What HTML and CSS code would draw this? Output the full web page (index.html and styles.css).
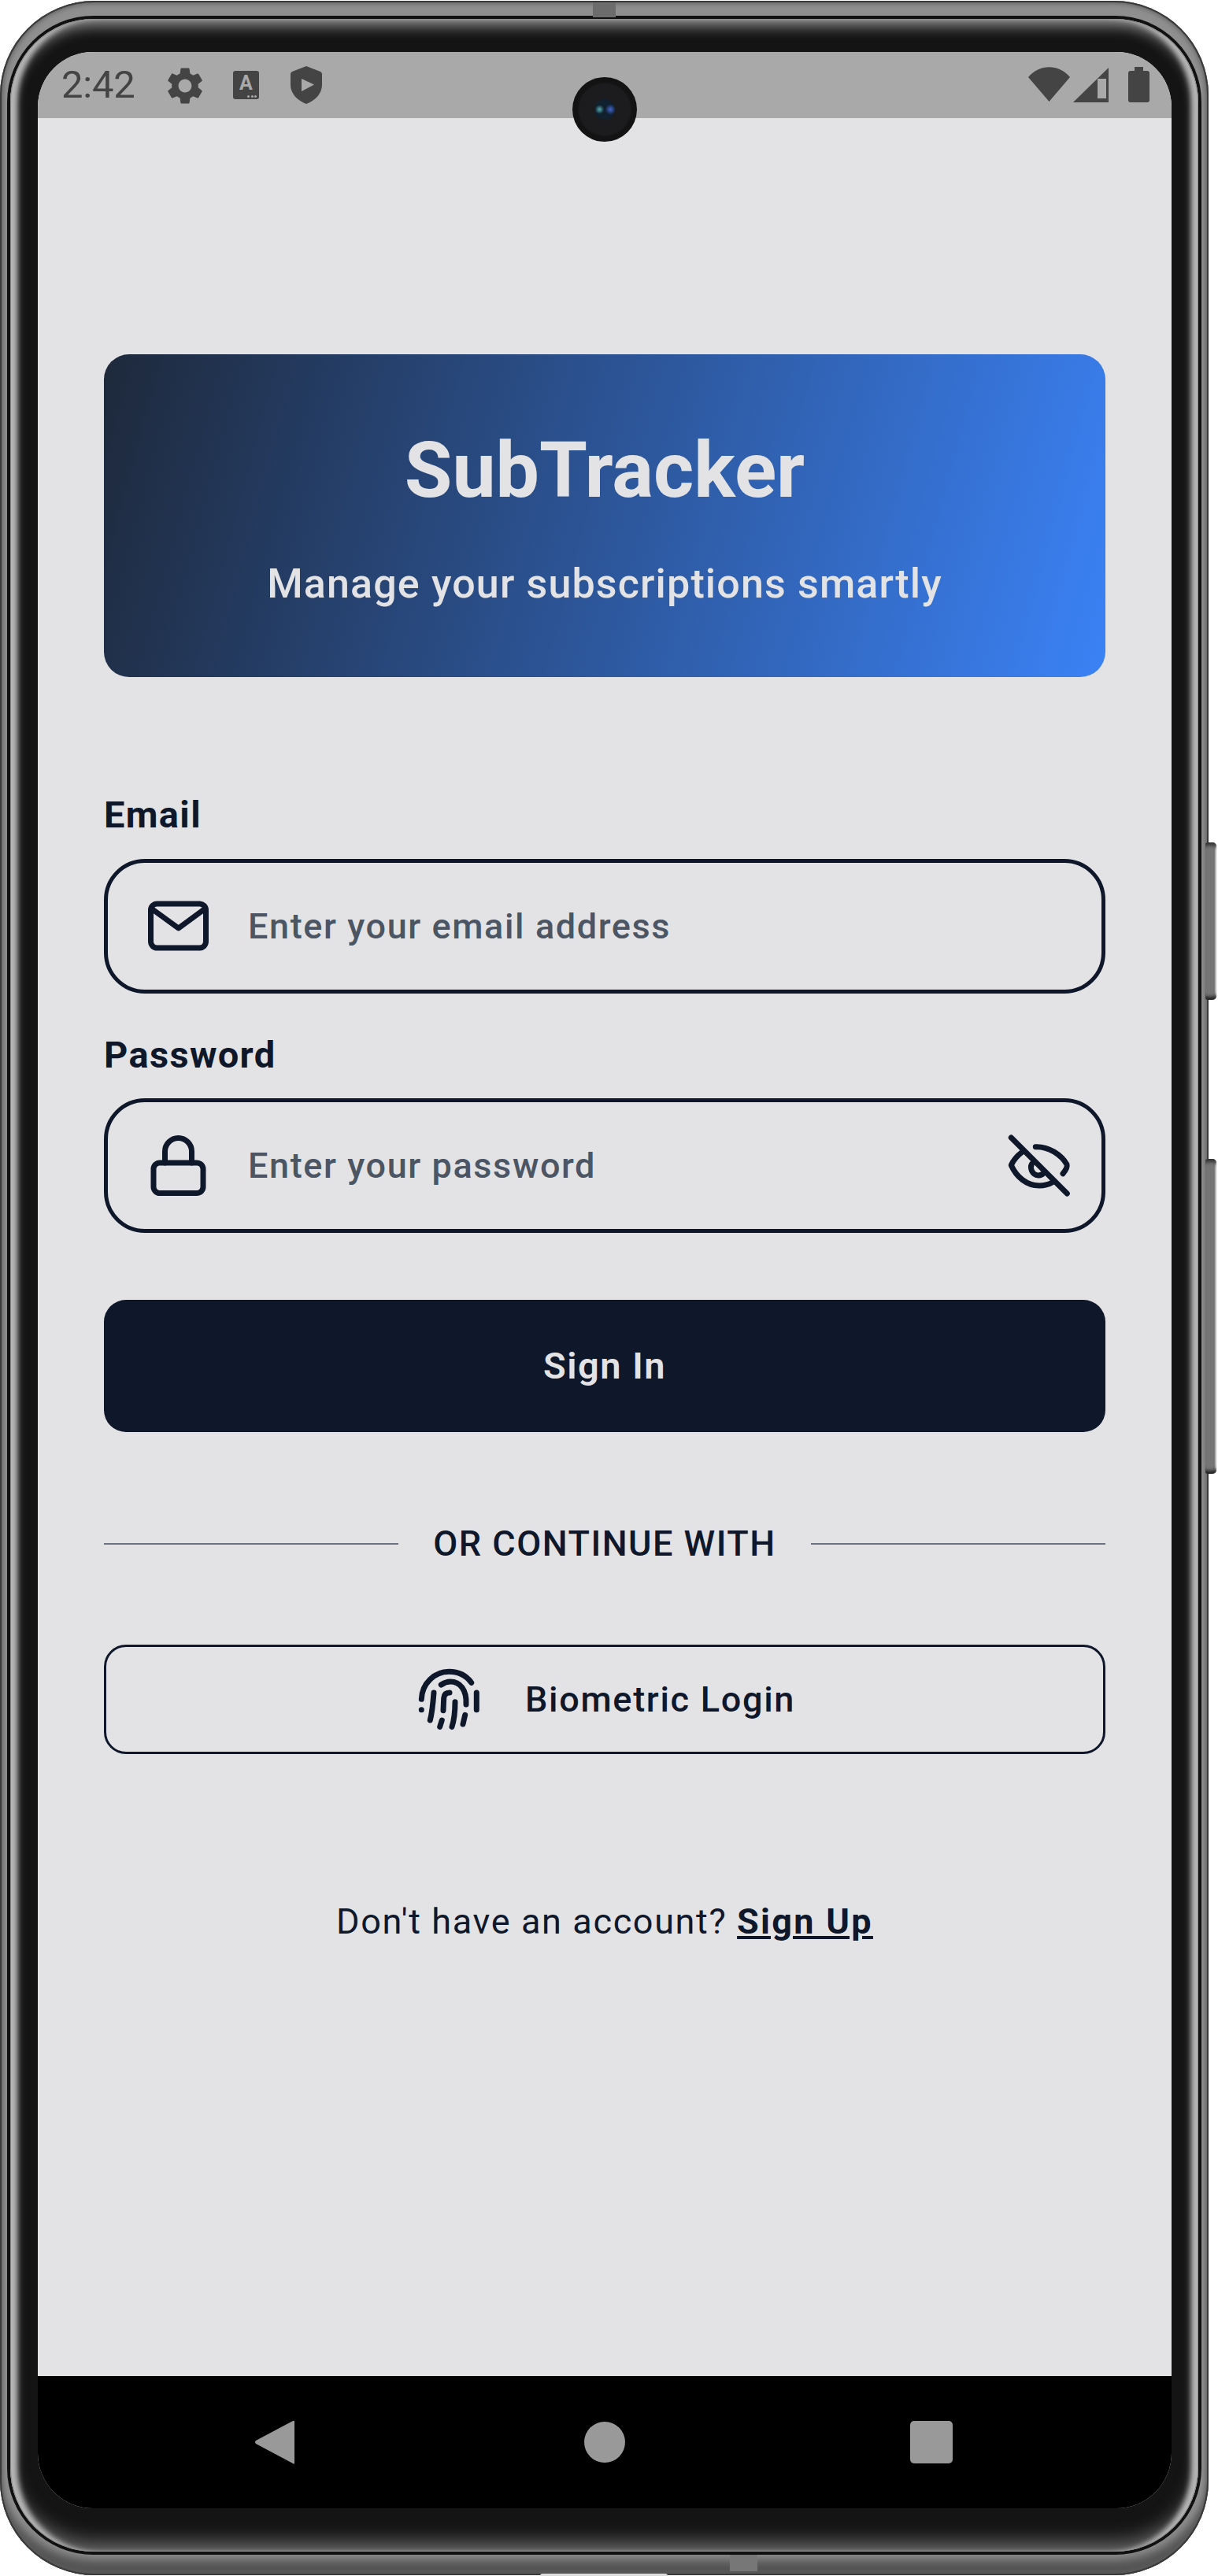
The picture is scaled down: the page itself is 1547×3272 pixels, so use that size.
FILE: index.html
```html
<!DOCTYPE html>
<html lang="en">
<head>
<meta charset="utf-8">
<title>SubTracker</title>
<link rel="stylesheet" href="styles.css">
</head>
<body>
<div class="device">
  <i class="side-key key-top"></i>
  <i class="side-key key-bottom"></i>
  <i class="seam seam-top"></i>
  <i class="seam seam-bottom"></i>
  <i class="port"></i>
  <div class="edge-line">
    <div class="bezel">
      <div class="screen">
        <header class="status">
          <div class="status-left">
            <span class="time">2:42</span>
            <svg class="ico-gear" viewBox="0 0 24 24"><path d="M19.14 12.94c.04-.3.06-.61.06-.94 0-.32-.02-.64-.07-.94l2.03-1.58c.18-.14.23-.41.12-.61l-1.92-3.32c-.12-.22-.37-.29-.59-.22l-2.39.96c-.5-.38-1.03-.7-1.62-.94l-.36-2.54c-.04-.24-.24-.41-.48-.41h-3.84c-.24 0-.43.17-.47.41l-.36 2.54c-.59.24-1.13.57-1.62.94l-2.39-.96c-.22-.08-.47 0-.59.22L2.74 8.87c-.12.21-.08.47.12.61l2.03 1.58c-.05.3-.09.63-.09.94s.02.64.07.94l-2.03 1.58c-.18.14-.23.41-.12.61l1.92 3.32c.12.22.37.29.59.22l2.39-.96c.5.38 1.03.7 1.62.94l.36 2.54c.05.24.24.41.48.41h3.84c.24 0 .44-.17.47-.41l.36-2.54c.59-.24 1.13-.56 1.62-.94l2.39.96c.22.08.47 0 .59-.22l1.92-3.32c.12-.22.07-.47-.12-.61l-2.01-1.58zM12 15.6c-1.98 0-3.6-1.62-3.6-3.6s1.62-3.6 3.6-3.6 3.6 1.62 3.6 3.6-1.62 3.6-3.6 3.6z"/></svg>
            <span class="ico-a">A<i class="dots"><b></b><b></b><b></b></i></span>
            <svg class="ico-shield" viewBox="0 0 40 48"><path d="M20 0 L38 7 Q40 8 40 10 V24 C40 35 31 44 20 48 C9 44 0 35 0 24 V10 Q0 8 2 7 Z"/><path class="cut" d="M14 16 L30 23.5 L14 32 Z"/></svg>
          </div>
          <div class="status-right">
            <svg class="ico-wifi" viewBox="0 0 53 44"><path d="M0 13 C14 -4 39 -4 53 13 L26.5 44 Z"/></svg>
            <svg class="ico-signal" viewBox="0 0 45 44"><path d="M0 44 L45 0 V44 Z"/><path class="cut" d="M31 14 H42 V39 H31 Z"/></svg>
            <svg class="ico-batt" viewBox="0 0 27 45"><path d="M8 0 H19 V5 H24 Q27 5 27 8 V42 Q27 45 24 45 H3 Q0 45 0 42 V8 Q0 5 3 5 H8 Z"/></svg>
          </div>
        </header>
        <main class="content">
          <section class="hero">
            <h1 class="hero-title">SubTracker</h1>
            <p class="hero-sub">Manage your subscriptions smartly</p>
          </section>

          <label class="label label-email">Email</label>
          <div class="field field-email">
            <svg class="icon" viewBox="0 0 92 92"><rect x="11.5" y="17" width="70" height="56" rx="8"/><path d="M15 25 L46.7 48 L78 25"/></svg>
            <span class="placeholder">Enter your email address</span>
          </div>

          <label class="label label-pass">Password</label>
          <div class="field field-pass">
            <svg class="icon" viewBox="0 0 92 92"><rect x="15" y="42" width="63" height="38.5" rx="8"/><path d="M29.5 42 V27.5 a17 17 0 0 1 34 0 V42"/></svg>
            <span class="placeholder">Enter your password</span>
            <svg class="icon icon-eye" viewBox="0 0 92 92"><path d="M10.3 10 L81.3 81"/><path d="M41.3 21.7 C58 21 74 32 81 44 C82 47 79 52 76 55.7"/><path d="M24.3 28.3 C18 33 13 39 10.3 45 C17 60 30 71 46 71 C52 71 58 69.5 62.7 66.7"/><path d="M36.5 43.5 C34 48 36 57 45 58 C47 58 49 57 50 56.5"/></svg>
          </div>

          <button class="signin">Sign In</button>

          <div class="divider"><span class="rule"></span><span class="divider-text">OR CONTINUE WITH</span><span class="rule"></span></div>

          <button class="biometric">
            <svg class="icon" viewBox="0 0 92 92"><path d="M11.3 45.3 C12 25 28 10.3 46.3 10.3 C58 10.3 68 15 74.7 24.3"/><path d="M36.3 27 C40 24.5 44 23 48 23 C60 23 69 33 68 52"/><path d="M81.3 37 V58.7"/><path d="M11.3 58.7 V58.8"/><path d="M27 37 C26 50 25 62 22.3 72"/><path d="M47 37 C42 37 40 40 39.7 44 L39 59.7"/><path d="M54 48.7 C54 60 53 71 50 80.3"/><path d="M37.3 72 L34.7 80.3"/><path d="M66.7 65.3 L64 77"/></svg>
            <span>Biometric Login</span>
          </button>

          <p class="signup">Don't have an account? <a class="signup-link">Sign Up</a></p>
        </main>
        <nav class="navbar">
          <svg class="nav-back" viewBox="0 0 50 56"><path d="M50 2 V54 Q50 57 48 55 L1 30 Q-1 28 1 26 L48 1 Q50 0 50 2 Z"/></svg>
          <i class="nav-home"></i>
          <i class="nav-recent"></i>
        </nav>
      </div>
      <div class="camera"><i class="lens"></i></div>
    </div>
  </div>
</div>
</body>
</html>
```

FILE: styles.css
```css
* { box-sizing: border-box; }
html, body { margin: 0; padding: 0; background: #fff; }
body { width: 1547px; height: 3272px; overflow: hidden; font-family: Roboto, "Liberation Sans", sans-serif; color: #0f172a; }

.device {
  position: relative;
  width: 1535px;
  height: 3270px;
  margin-top: 1px;
  padding: 19px 9px 26px;
  border-radius: 120px;
  background: #8f8f8f;
  box-shadow: inset 0 0 0 2px #3a3a3a, inset 0 0 6px 3px #5c5c5c, inset 0 -26px 12px -6px #555;
}
.edge-line { height: 100%; padding: 4px; border-radius: 110px; background: #111; }
.bezel {
  position: relative;
  height: 100%;
  padding: 42px 34px 55px 35px;
  border-radius: 106px;
  background: #141414;
  box-shadow: inset 0 0 0 1px #8c8c8c, inset 11px 0 6px -2px #b5b5b5, inset -11px 0 6px -2px #b5b5b5, inset 0 8px 18px 0 #999, inset 0 -16px 22px -2px #5e5e5e;
}
.side-key { position: absolute; left: 1531px; width: 14px; border-radius: 3px 5px 5px 3px; background: #757575; box-shadow: inset 0 8px 4px -4px #333, inset 0 -8px 4px -4px #222, inset -2px 0 1px #bbb; }
.key-top { top: 1069px; height: 200px; }
.key-bottom { top: 1471px; height: 400px; }
.seam { position: absolute; background: #6c6c6c; }
.seam-top { left: 753px; top: 2px; width: 29px; height: 19px; }
.seam-bottom { left: 927px; top: 3244px; width: 35px; height: 21px; background: #777; }
.port { position: absolute; left: 686px; top: 3268px; width: 162px; height: 3px; border-radius: 3px 3px 0 0; background: #ddd; }

.screen { display: flex; flex-direction: column; height: 100%; border-radius: 70px; overflow: hidden; background: #e3e3e5; }

.status { display: flex; flex: 0 0 84px; justify-content: space-between; align-items: flex-start; padding: 0 28px 0 30px; background: #a9a9aa; color: #444; fill: #444; }
.status-left, .status-right { display: flex; align-items: flex-start; }
.time { width: 129px; font-size: 49px; font-weight: 400; line-height: 57px; margin-top: 13px; letter-spacing: -0.2px; }
.ico-gear { width: 56px; height: 56px; margin-top: 15px; }
.ico-a { position: relative; width: 33px; height: 36px; margin: 24px 0 0 33px; border-radius: 3px; background: #444; color: #a9a9aa; font-size: 25px; font-weight: 700; line-height: 31px; text-align: center; }
.dots { position: absolute; right: 3px; bottom: 2px; display: flex; gap: 1.5px; }
.dots b { width: 3px; height: 3px; border-radius: 50%; background: #a9a9aa; }
.ico-shield { width: 40px; height: 48px; margin: 18px 0 0 40px; }
.cut { fill: #a9a9aa; }
.ico-wifi { width: 53px; height: 44px; margin-top: 19px; }
.ico-signal { width: 45px; height: 44px; margin: 20px 0 0 4px; }
.ico-batt { width: 27px; height: 45px; margin: 19px 0 0 25px; }

.content { flex: 1; padding: 300px 84px 0; }
.hero { display: flex; flex-direction: column; align-items: center; height: 410px; padding-top: 88px; border-radius: 32px; background: linear-gradient(105deg, #1e293b, #3b82f6); color: #e3e3e5; }
.hero-title { margin: 0; font-size: 98.5px; font-weight: 700; line-height: 120px; }
.hero-sub { margin: 54px 0 0; font-size: 52px; font-weight: 500; line-height: 60px; letter-spacing: 1.15px; }

.label { display: block; font-size: 47px; font-weight: 700; line-height: 60px; letter-spacing: 1.35px; }
.label-email { margin-top: 145px; }
.label-pass { margin-top: 48px; }

.field { display: flex; align-items: center; height: 171px; padding: 0 33px 0 43px; border: 5px solid #0f172a; border-radius: 52px; }
.field-email { margin-top: 26px; }
.field-pass { margin-top: 25px; }
.icon { flex: none; width: 92px; height: 92px; fill: none; stroke: #0f172a; stroke-width: 7; stroke-linecap: round; stroke-linejoin: round; }
.placeholder { flex: 1; margin-left: 43px; color: #4b5563; font-size: 45px; font-weight: 500; line-height: 60px; letter-spacing: 1.6px; }

.signin { display: block; width: 100%; height: 168px; margin-top: 85px; border: 0; border-radius: 28px; background: #0f172a; color: #e3e3e5; font: 600 47px/60px Roboto, sans-serif; letter-spacing: 1.5px; }

.divider { display: flex; align-items: center; gap: 44px; height: 60px; margin-top: 112px; }
.rule { flex: 1; height: 2px; background: #6b7280; }
.divider-text { font-size: 45px; font-weight: 500; line-height: 60px; letter-spacing: 1.5px; }

.biometric { display: flex; align-items: center; justify-content: center; gap: 51px; width: 100%; height: 139px; margin-top: 98px; padding-right: 8px; border: 3px solid #0f172a; border-radius: 28px; background: transparent; color: #0f172a; font: 500 45px/60px Roboto, sans-serif; letter-spacing: 1.7px; }

.signup { margin: 183px 0 0; font-size: 45px; font-weight: 400; line-height: 60px; text-align: center; letter-spacing: 1.63px; }
.signup-link { font-weight: 700; text-decoration: underline; letter-spacing: 2.3px; }

.navbar { position: relative; display: flex; flex: 0 0 168px; align-items: center; background: #000; }
.nav-back { width: 50px; height: 56px; margin: 0 0 0 276px; fill: #999; }
.nav-home { width: 52px; height: 52px; margin-left: 368px; border-radius: 50%; background: #999; }
.nav-recent { width: 54px; height: 54px; margin-left: 362px; border-radius: 5px; background: #999; }

.camera { position: absolute; left: 714px; top: 74px; display: flex; align-items: center; justify-content: center; width: 82px; height: 82px; border-radius: 50%; background: radial-gradient(circle, #1c1c1e 0, #1c1c1e 55%, #131313 60%); }
.lens { width: 26px; height: 26px; border-radius: 50%; background: radial-gradient(circle at 25% 50%, #5aa 0, transparent 25%), radial-gradient(circle at 78% 50%, #46c 0, transparent 28%), #10202e; }
```
